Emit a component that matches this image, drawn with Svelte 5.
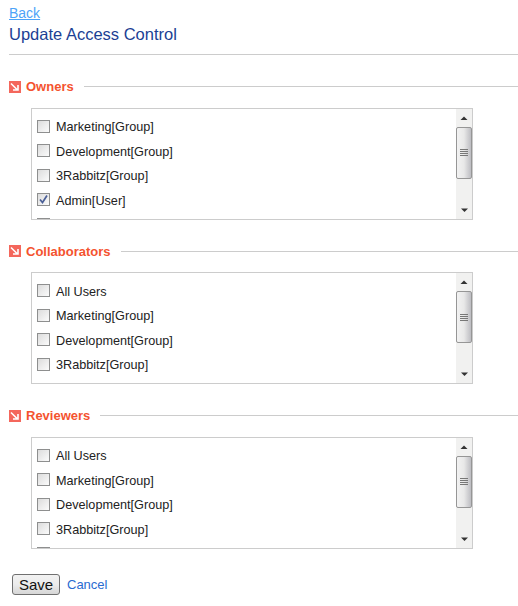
<script>
  const sections = [
    {
      title: 'Owners',
      items: [
        { label: 'Marketing[Group]' },
        { label: 'Development[Group]' },
        { label: '3Rabbitz[Group]' },
        { label: 'Admin[User]', checked: true },
        { label: '' }
      ]
    },
    {
      title: 'Collaborators',
      items: [
        { label: 'All Users' },
        { label: 'Marketing[Group]' },
        { label: 'Development[Group]' },
        { label: '3Rabbitz[Group]' }
      ]
    },
    {
      title: 'Reviewers',
      items: [
        { label: 'All Users' },
        { label: 'Marketing[Group]' },
        { label: 'Development[Group]' },
        { label: '3Rabbitz[Group]' },
        { label: '' }
      ]
    }
  ];
</script>

<div class="page">
  <a class="back" href="#back">Back</a>
  <h1>Update Access Control</h1>
  <hr />

  {#each sections as section}
    <section>
      <div class="heading">
        <svg class="arrow" width="12" height="12" viewBox="0 0 12 12">
          <rect width="12" height="12" fill="#f4675c" />
          <path d="M2 2.5 L8 8.5 M9 4 V9 H4" fill="none" stroke="#fff" stroke-width="1.6" />
        </svg>
        <h2>{section.title}</h2>
        <span class="line"></span>
      </div>
      <div class="box">
        <div class="list">
          {#each section.items as item}
            <label class="row">
              <span class="check">
                {#if item.checked}
                  <svg width="11" height="11" viewBox="0 0 11 11">
                    <path d="M2 5.5 L4.5 8.5 L9 1.5" fill="none" stroke="#4a5f97" stroke-width="1.7" />
                  </svg>
                {/if}
              </span>
              {item.label}
            </label>
          {/each}
        </div>
        <div class="scrollbar">
          <svg class="btn" width="16" height="18" viewBox="0 0 16 18">
            <path d="M4.5 11 H11.5 L8 7.5 Z" fill="#333" />
          </svg>
          <div class="thumb">
            <span></span><span></span><span></span><span></span>
          </div>
          <div class="track"></div>
          <svg class="btn" width="16" height="18" viewBox="0 0 16 18">
            <path d="M5 7.5 H12 L8.5 11 Z" fill="#333" />
          </svg>
        </div>
      </div>
    </section>
  {/each}

  <div class="actions">
    <button type="button">Save</button>
    <a class="cancel" href="#cancel">Cancel</a>
  </div>
</div>

<style>
  :global(body) {
    margin: 0;
    background: #fff;
  }

  .page {
    width: 518px;
    height: 606px;
    box-sizing: border-box;
    padding: 5px 0 0 9px;
    overflow: hidden;
    font-family: "Liberation Sans", Arial, sans-serif;
  }

  .back {
    display: block;
    width: fit-content;
    font-size: 14px;
    line-height: 16px;
    color: #4da3f8;
  }

  h1 {
    margin: 2px 0 0;
    font-size: 16.5px;
    line-height: 22px;
    font-weight: normal;
    color: #1c3f94;
  }

  hr {
    margin: 9px 0 0;
    border: 0;
    border-top: 1px solid #ccc;
  }

  section {
    margin-top: 23.9px;
  }

  section + section {
    margin-top: 23.5px;
  }

  .heading {
    display: flex;
    align-items: center;
    height: 16px;
  }

  .arrow {
    flex-shrink: 0;
  }

  h2 {
    margin: 0 0 0 5px;
    font-size: 13px;
    font-weight: bold;
    color: #f4532f;
  }

  .line {
    flex: 1;
    margin-left: 10px;
    border-top: 1px solid #ccc;
  }

  .box {
    display: flex;
    width: 442px;
    height: 112px;
    box-sizing: border-box;
    margin: 13px 0 0 22px;
    border: 1px solid #ccc;
    overflow: hidden;
  }

  .list {
    flex: 1;
    padding-top: 6px;
    overflow: hidden;
  }

  .row {
    display: flex;
    align-items: center;
    height: 24.5px;
    padding-left: 5px;
    font-size: 12.67px;
    color: #222;
  }

  .check {
    display: flex;
    align-items: center;
    justify-content: center;
    width: 11px;
    height: 11px;
    margin: 0 6px 2px 0;
    border: 1px solid #8e8f8f;
    background: linear-gradient(135deg, #dcdcdc, #fbfbfb);
    flex-shrink: 0;
  }

  .scrollbar {
    display: flex;
    flex-direction: column;
    width: 16px;
    background: #f1f1f0;
    flex-shrink: 0;
  }

  .btn {
    flex-shrink: 0;
  }

  .thumb {
    display: flex;
    flex-direction: column;
    align-items: center;
    justify-content: center;
    gap: 1px;
    height: 52px;
    box-sizing: border-box;
    border: 1px solid #969696;
    border-radius: 2px;
    background: linear-gradient(90deg, #f2f2f2, #e8e8e8 50%, #bdbdc2);
  }

  .thumb span {
    width: 8px;
    height: 1px;
    background: #777;
  }

  .track {
    flex: 1;
  }

  .actions {
    display: flex;
    align-items: center;
    margin: 25px 0 0 3px;
  }

  button {
    width: 48px;
    height: 21px;
    padding: 0;
    border: 1px solid #707070;
    border-radius: 3px;
    background: linear-gradient(#f2f2f2, #ebebeb 50%, #d6d6d6);
    font-family: inherit;
    font-size: 15px;
    color: #111;
  }

  .cancel {
    margin-left: 7px;
    font-size: 13px;
    color: #2a6bd0;
    text-decoration: none;
  }
</style>
